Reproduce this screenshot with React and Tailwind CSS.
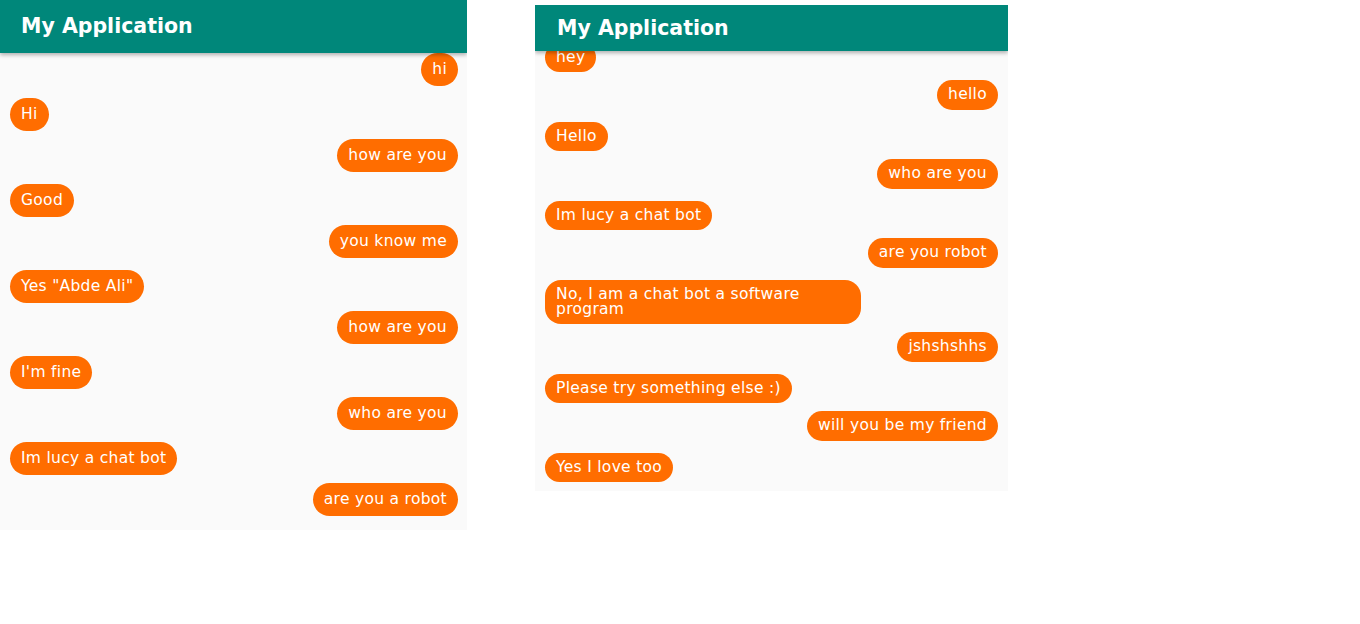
import React from "react";

const leftChat = [
  { me: true, text: "hi" },
  { me: false, text: "Hi" },
  { me: true, text: "how are you" },
  { me: false, text: "Good" },
  { me: true, text: "you know me" },
  { me: false, text: 'Yes "Abde Ali"' },
  { me: true, text: "how are you" },
  { me: false, text: "I'm fine" },
  { me: true, text: "who are you" },
  { me: false, text: "Im lucy a chat bot" },
  { me: true, text: "are you a robot" },
];

const rightChat = [
  { me: false, text: "hey" },
  { me: true, text: "hello" },
  { me: false, text: "Hello" },
  { me: true, text: "who are you" },
  { me: false, text: "Im lucy a chat bot" },
  { me: true, text: "are you robot" },
  { me: false, text: "No, I am a chat bot a software program", wide: true },
  { me: true, text: "jshshshhs" },
  { me: false, text: "Please try something else :)" },
  { me: true, text: "will you be my friend" },
  { me: false, text: "Yes I love too" },
];

function Bubble({ msg, first, tall }) {
  let cls = "bg-[#ff6d00] text-white text-[15.5px] tracking-[0.3px] px-[11px] ";
  if (msg.wide) {
    cls += "w-[316px] py-[7px] leading-[15px] rounded-[16px] self-start mt-[12px]";
  } else {
    cls += "flex items-center whitespace-nowrap rounded-full ";
    if (msg.me) {
      cls += tall ? "self-end h-[33px] " : "self-end h-[30px] ";
      cls += first ? "" : "mt-[8px]";
    } else {
      cls += tall ? "self-start h-[33px] " : "self-start h-[29px] ";
      cls += first ? "" : "mt-[12px]";
    }
  }
  return <div className={cls}>{msg.text}</div>;
}

function Phone({ messages, tall }) {
  return (
    <div
      className={
        tall
          ? "w-[467px] h-[530px] bg-[#fafafa] flex flex-col overflow-hidden"
          : "w-[473px] h-[486px] mt-[5px] bg-[#fafafa] flex flex-col overflow-hidden"
      }
    >
      <div
        className={
          tall
            ? "relative z-10 h-[53px] shrink-0 bg-[#00877a] shadow-[0_2px_4px_rgba(0,0,0,0.3)] flex items-center pl-[21px]"
            : "relative z-10 h-[46px] shrink-0 bg-[#00877a] shadow-[0_2px_4px_rgba(0,0,0,0.3)] flex items-center pl-[22px]"
        }
      >
        <span className="text-white font-bold text-[20.5px]">My Application</span>
      </div>
      <div
        className={
          tall
            ? "flex flex-col pl-[10px] pr-[9px]"
            : "flex flex-col px-[10px] -mt-[8px]"
        }
      >
        {messages.map((m, i) => (
          <Bubble key={i} msg={m} first={i === 0} tall={tall} />
        ))}
      </div>
    </div>
  );
}

export default function App() {
  return (
    <div
      className="w-[1360px] h-[624px] bg-white flex items-start gap-[68px]"
      style={{ fontFamily: '"DejaVu Sans", sans-serif' }}
    >
      <Phone messages={leftChat} tall />
      <Phone messages={rightChat} />
    </div>
  );
}
